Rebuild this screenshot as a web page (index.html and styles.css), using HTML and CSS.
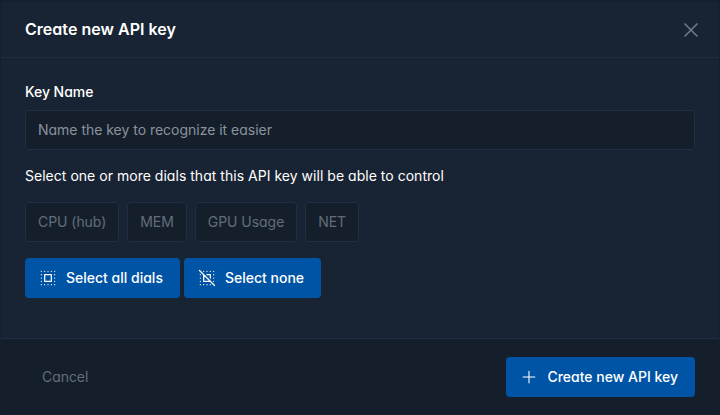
FILE: index.html
```html
<!DOCTYPE html>
<html lang="en">
<head>
<meta charset="utf-8">
<title>Create new API key</title>
<link rel="stylesheet" href="styles.css">
</head>
<body>
<div class="modal">
  <header class="modal-header">
    <h5 class="modal-title">Create new API key</h5>
    <button class="close" aria-label="Close"><svg width="16" height="16" viewBox="0 0 16 16"><path d="M1.5 1.5l13 13M14.5 1.5l-13 13"/></svg></button>
  </header>
  <main class="modal-body">
    <label class="label" for="key">Key Name</label>
    <input class="input" id="key" placeholder="Name the key to recognize it easier">
    <div class="hint">Select one or more dials that this API key will be able to control</div>
    <div class="dials">
      <span class="dial">CPU (hub)</span><span class="dial">MEM</span><span class="dial">GPU Usage</span><span class="dial">NET</span>
    </div>
    <div class="actions">
      <button class="btn"><svg class="icon" viewBox="0 0 24 24"><path d="M8 8h8v8h-8zM4 4v.01M8 4v.01M12 4v.01M16 4v.01M20 4v.01M4 8v.01M20 8v.01M4 12v.01M20 12v.01M4 16v.01M20 16v.01M4 20v.01M8 20v.01M12 20v.01M16 20v.01M20 20v.01"/></svg>Select all dials</button>
      <button class="btn"><svg class="icon" viewBox="0 0 24 24"><path d="M12 8h4v4m0 4h-8v-8M4 4v.01M8 4v.01M12 4v.01M16 4v.01M20 4v.01M4 8v.01M20 8v.01M4 12v.01M20 12v.01M4 16v.01M20 16v.01M4 20v.01M8 20v.01M12 20v.01M16 20v.01M20 20v.01M3 3l18 18"/></svg>Select none</button>
    </div>
  </main>
  <footer class="modal-footer">
    <button class="cancel">Cancel</button>
    <button class="btn create"><svg class="icon" viewBox="0 0 24 24"><path d="M12 5v14M5 12h14"/></svg>Create new API key</button>
  </footer>
</div>
</body>
</html>
```
FILE: styles.css
```css
* { box-sizing: border-box; }
body { margin: 0; background: #14202b; color: #fff; font: 14px/20px Inter, sans-serif; font-feature-settings: "cv03", "cv04", "cv11"; }
button, input { font: inherit; font-feature-settings: inherit; }
.modal { height: 412px; margin: 2px 1px 1px; display: flex; flex-direction: column; background: #182433; border-radius: 4px; overflow: hidden; }
.modal-header { height: 56px; padding: 0 18px 2px 24px; display: flex; align-items: center; justify-content: space-between; border-bottom: 1px solid #1f2e41; }
.modal-title { margin: 0; font-size: 16px; font-weight: 600; letter-spacing: .03px; }
.close { width: 20px; height: 20px; padding: 2px; margin-top: 2px; border: 0; background: none; display: flex; }
.close svg { stroke: #747c85; stroke-width: 1.5; fill: none; }
.modal-body { flex: 1; padding: 24px 24px 0; }
.label { display: block; margin-bottom: 8px; font-weight: 500; letter-spacing: -.05px; }
.input { display: block; width: 100%; height: 40px; padding: 0 12px 2px; border: 1px solid #1f2e41; border-radius: 4px; background: #151f2c; color: #fff; }
.input::placeholder { color: #8a929c; opacity: 1; letter-spacing: -.02px; }
.hint { margin-top: 16px; letter-spacing: .025px; }
.dials { display: flex; gap: 8px; margin-top: 16px; }
.dial { height: 40px; padding: 9px 12px; border: 1px solid #1f2e41; border-radius: 4px; background: #151f2c; color: #626d7b; letter-spacing: -.05px; }
.actions { display: flex; gap: 4px; margin-top: 16px; }
.btn { height: 40px; padding: 0 17px 0 13px; border: 0; border-radius: 4px; background: #0054a6; color: #fff; font-weight: 500; display: flex; align-items: center; }
.icon { width: 20px; height: 20px; margin-right: 8px; fill: none; stroke: currentColor; stroke-width: 1.5; stroke-linecap: round; stroke-linejoin: round; }
.create .icon { stroke-width: 1.3; }
.modal-footer { height: 76px; padding: 1px 24px 0; display: flex; align-items: center; justify-content: space-between; background: #151f2c; border-top: 1px solid #1f2e41; }
.cancel { padding: 0 17px; border: 0; background: none; color: #626d7b; letter-spacing: -.05px; }
```
